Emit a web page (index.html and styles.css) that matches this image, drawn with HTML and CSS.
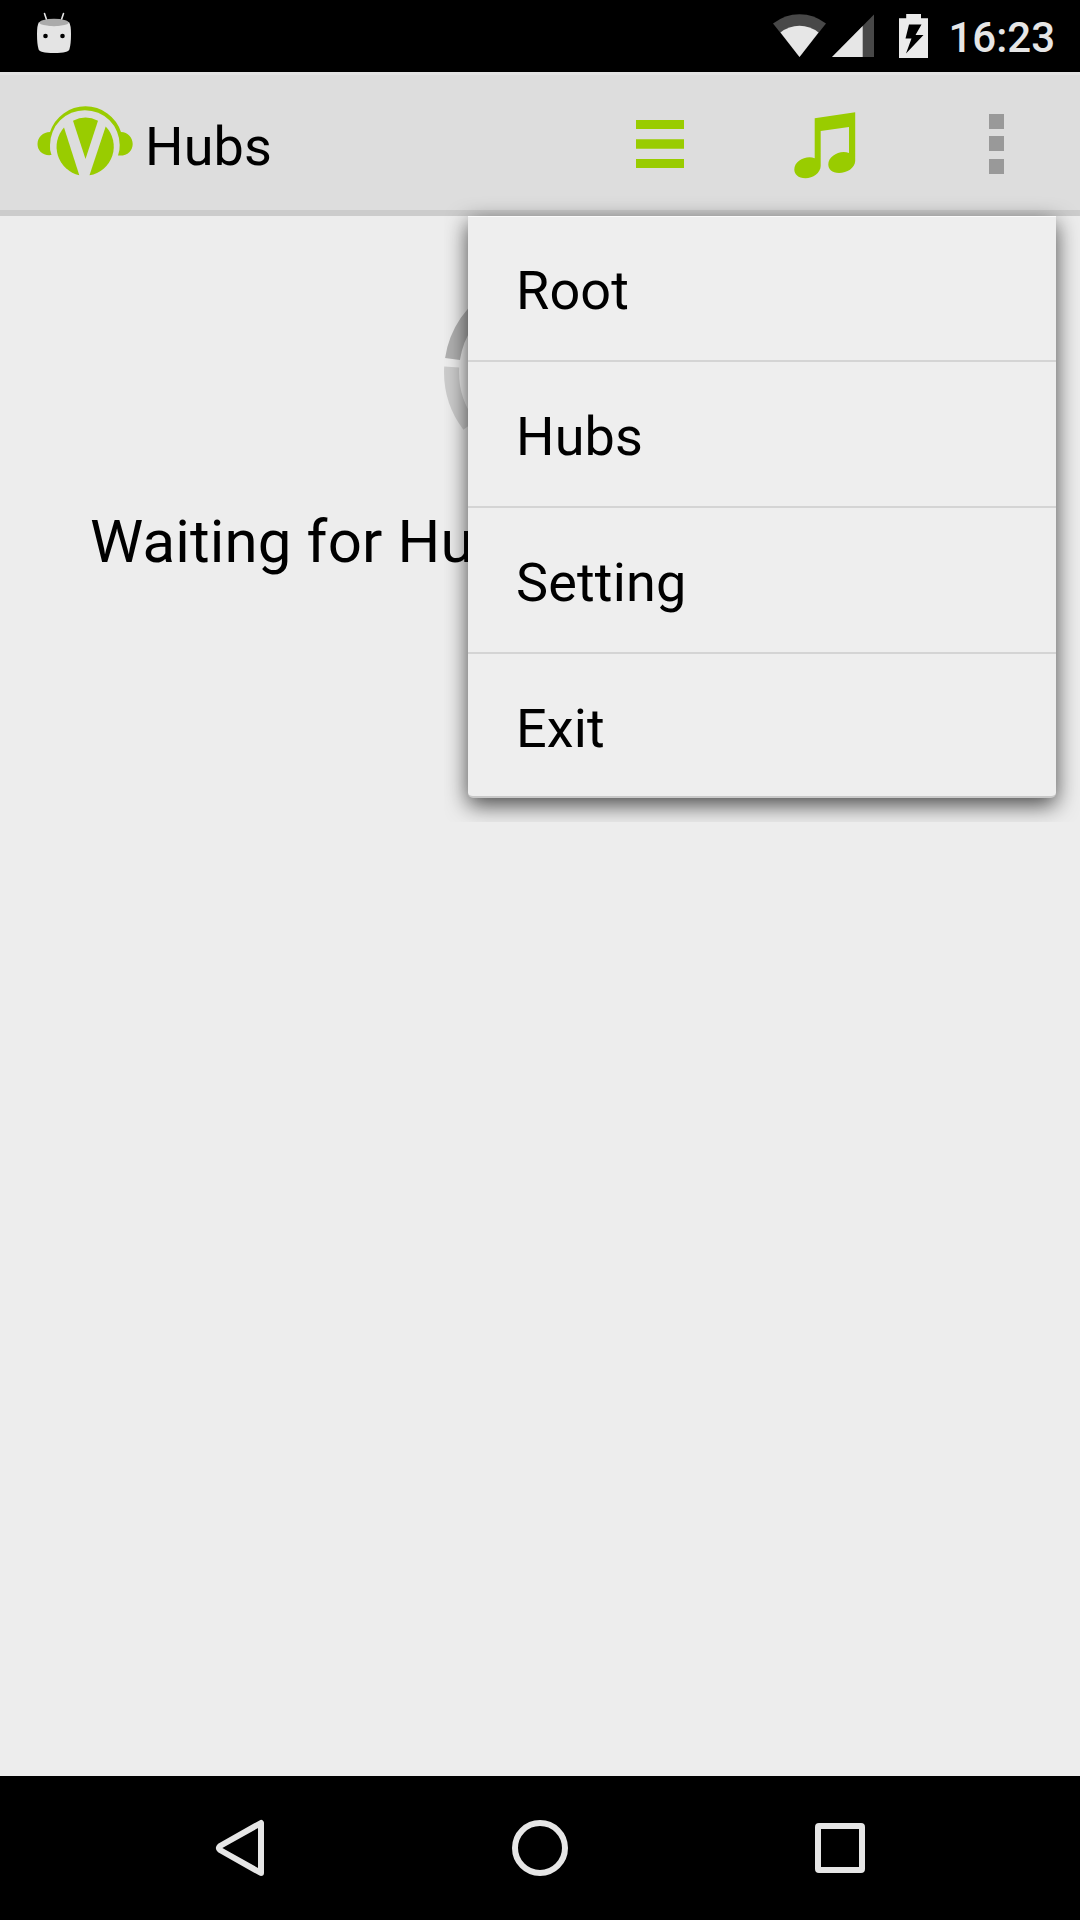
FILE: index.html
```html
<!DOCTYPE html>
<html lang="en">
<head>
<meta charset="utf-8">
<title>Hubs</title>
<link rel="stylesheet" href="styles.css">
</head>
<body>
<div class="screen">
  <header class="status-bar">
    <svg class="status-app" width="36" height="42" viewBox="36 12 36 42">
      <path d="M44.5 13.5 47 21M63.5 13.5 61 21" stroke="#e4e4e4" stroke-width="1.6" stroke-linecap="round"/>
      <path d="M39 22Q54 29 69 22Q71 25 71 34Q71 44 69.5 49Q69 53 54 53Q39 53 38.500 49Q37 44 37 34Q37 25 39 22Z" fill="#e4e4e4"/>
      <ellipse cx="54" cy="22.500" rx="14.700" ry="3.700" fill="#aaa"/>
      <circle cx="45.500" cy="36" r="2.300"/><circle cx="62.500" cy="36" r="2.300"/>
    </svg>
    <div class="status-icons">
      <svg width="156" height="46" viewBox="773 13 156 46">
        <path d="M799.500 57 773 23.500Q785 14.200 799.500 14.200T826 23.500Z" fill="#484848"/>
        <path d="M799.500 57 780.500 32.500Q789 25.800 799.500 25.800T818.500 32.500Z" fill="#e6e6e6"/>
        <path d="M832 57H874V14.500Z" fill="#484848"/>
        <path d="M832 57H862.700V26Z" fill="#e6e6e6"/>
        <path d="M899 18.200H906.200V14H921V18.200H928V58H899Z" fill="#ebebeb"/>
        <path d="M909 24.500H921.500L915.500 35H923.500L906 53.500 911.500 38.500H905.500Z" fill="#000"/>
      </svg>
      <span class="clock">16:23</span>
    </div>
  </header>

  <div class="action-bar">
    <svg width="96" height="72" viewBox="37 106 96 72" fill="#9c0">
      <path d="M50 132A37.400 37.400 0 0 1 121 132C128 132 132.700 138 132.700 144C132.700 151 127 156.500 118 155.500Q120 149 119.700 145A34.850 34.850 0 0 0 50 145Q49.500 150 51.500 155C43 156 37.500 151 37.500 144C37.500 137 43 132 50 132Z"/>
      <path d="M73 120.700Q85.500 114.500 98 120.700L85.500 159Z"/>
      <path d="M64 127.500A29 29 0 0 0 79.300 175.200Z"/>
      <path d="M105.700 126.500A29 29 0 0 1 89.500 175.200Z"/>
    </svg>
    <h1 class="title">Hubs</h1>
    <nav class="actions">
      <svg width="48" height="48" viewBox="0 0 48 48" fill="#9c0"><path d="M0 0H48V9H0ZM0 19.300H48V28.700H0ZM0 39H48V48H0Z"/></svg>
      <svg width="62" height="68" viewBox="794 112 62 68" fill="#9c0">
        <path d="M814.700 118.200 855.200 112.300V161C855 168 847 173 839 173C832 173 828.300 169 828.300 164.500C828.300 156 840 149.500 849 153V127L820.700 131V166C820.500 173 813 178.300 805.500 178.300C798 178.300 794.300 174 794.300 169.500C794.300 161 806 155 814.700 158.200Z"/>
      </svg>
      <svg width="15" height="60" viewBox="0 0 15 60" fill="#999"><path d="M0 0H15V15H0ZM0 22H15V37H0ZM0 45H15V60H0Z"/></svg>
    </nav>
  </div>

  <main class="content">
    <svg class="spinner" width="192" height="192" viewBox="-96 -96 192 192" fill="none" stroke-width="15">
      <path d="M-87.500-13A88.500 88.500 0 0 1 42-78" stroke="#b0b0b0"/>
      <path d="M-88.300-5A88.500 88.500 0 0 0-70.600 53.300" stroke="#ccc"/>
    </svg>
    <p class="message">Waiting for Hubs</p>
    <ul class="menu">
      <li>Root</li>
      <li>Hubs</li>
      <li>Setting</li>
      <li>Exit</li>
    </ul>
  </main>

  <footer class="nav-bar">
    <svg width="50" height="58" viewBox="215 1819 50 58"><path d="M261 1823V1873L220 1850Q218 1848 220 1846Z"/></svg>
    <svg width="56" height="56" viewBox="0 0 56 56"><circle cx="28" cy="28" r="25"/></svg>
    <svg width="50" height="50" viewBox="0 0 50 50"><rect x="3" y="3" width="44" height="44" rx="1"/></svg>
  </footer>
</div>
</body>
</html>
```
FILE: styles.css
```css
* { box-sizing: border-box; margin: 0; padding: 0; }
body { background: #ededed; color: #000; font-family: Roboto, sans-serif; letter-spacing: .15px; }
svg { display: block; flex: none; }

.screen { display: flex; flex-direction: column; width: 1080px; height: 1920px; overflow: hidden; }

.status-bar {
  display: flex; justify-content: space-between;
  height: 72px; padding: 12px 25px 0 36px; background: #000;
}
.status-icons { display: flex; gap: 19px; padding-top: 1px; }
.clock { color: #e6e6e6; font-size: 42px; font-weight: 500; line-height: 49px; letter-spacing: 0; }

.action-bar {
  display: flex; height: 144px; padding: 31px 76px 0 37px;
  background: #ddd; border-top: 3px solid #e3e3e3; border-bottom: 6px solid #ccc;
}
.title { margin: 9px 0 0 12px; font-size: 54px; font-weight: 400; line-height: 63px; }
.actions { display: flex; margin-left: auto; padding-top: 6px; }
.actions svg:nth-child(1) { margin: 8px 110px 0 0; }
.actions svg:nth-child(2) { margin-right: 133px; }
.actions svg:nth-child(3) { margin-top: 2px; }

.content { position: relative; flex: 1; padding: 60px 90px 0; }
.spinner { margin: 0 auto; }
.message { margin-top: 39px; font-size: 60px; line-height: 70px; }

.menu {
  position: absolute; top: 0; left: 468px; width: 588px; height: 582px;
  list-style: none; background: #eee;
  border-top: 1px solid #fafafa; border-bottom: 2px solid #c8c8c8; border-radius: 0 0 5px 5px;
  box-shadow: 0 7px 22px rgba(0, 0, 0, .7);
  clip-path: inset(-20px -24px -24px -24px);
}
.menu li { height: 146px; padding: 43px 48px 0; border-bottom: 2px solid #d4d4d4; font-size: 54px; line-height: 63px; }
.menu li:first-child { height: 145px; padding-top: 42px; }
.menu li:last-child { height: 142px; border: 0; }

.nav-bar {
  display: flex; align-items: center; justify-content: space-between;
  height: 144px; padding: 0 215px; background: #000;
}
.nav-bar svg { fill: none; stroke: #e6e6e6; stroke-width: 6; stroke-linejoin: round; }
```
